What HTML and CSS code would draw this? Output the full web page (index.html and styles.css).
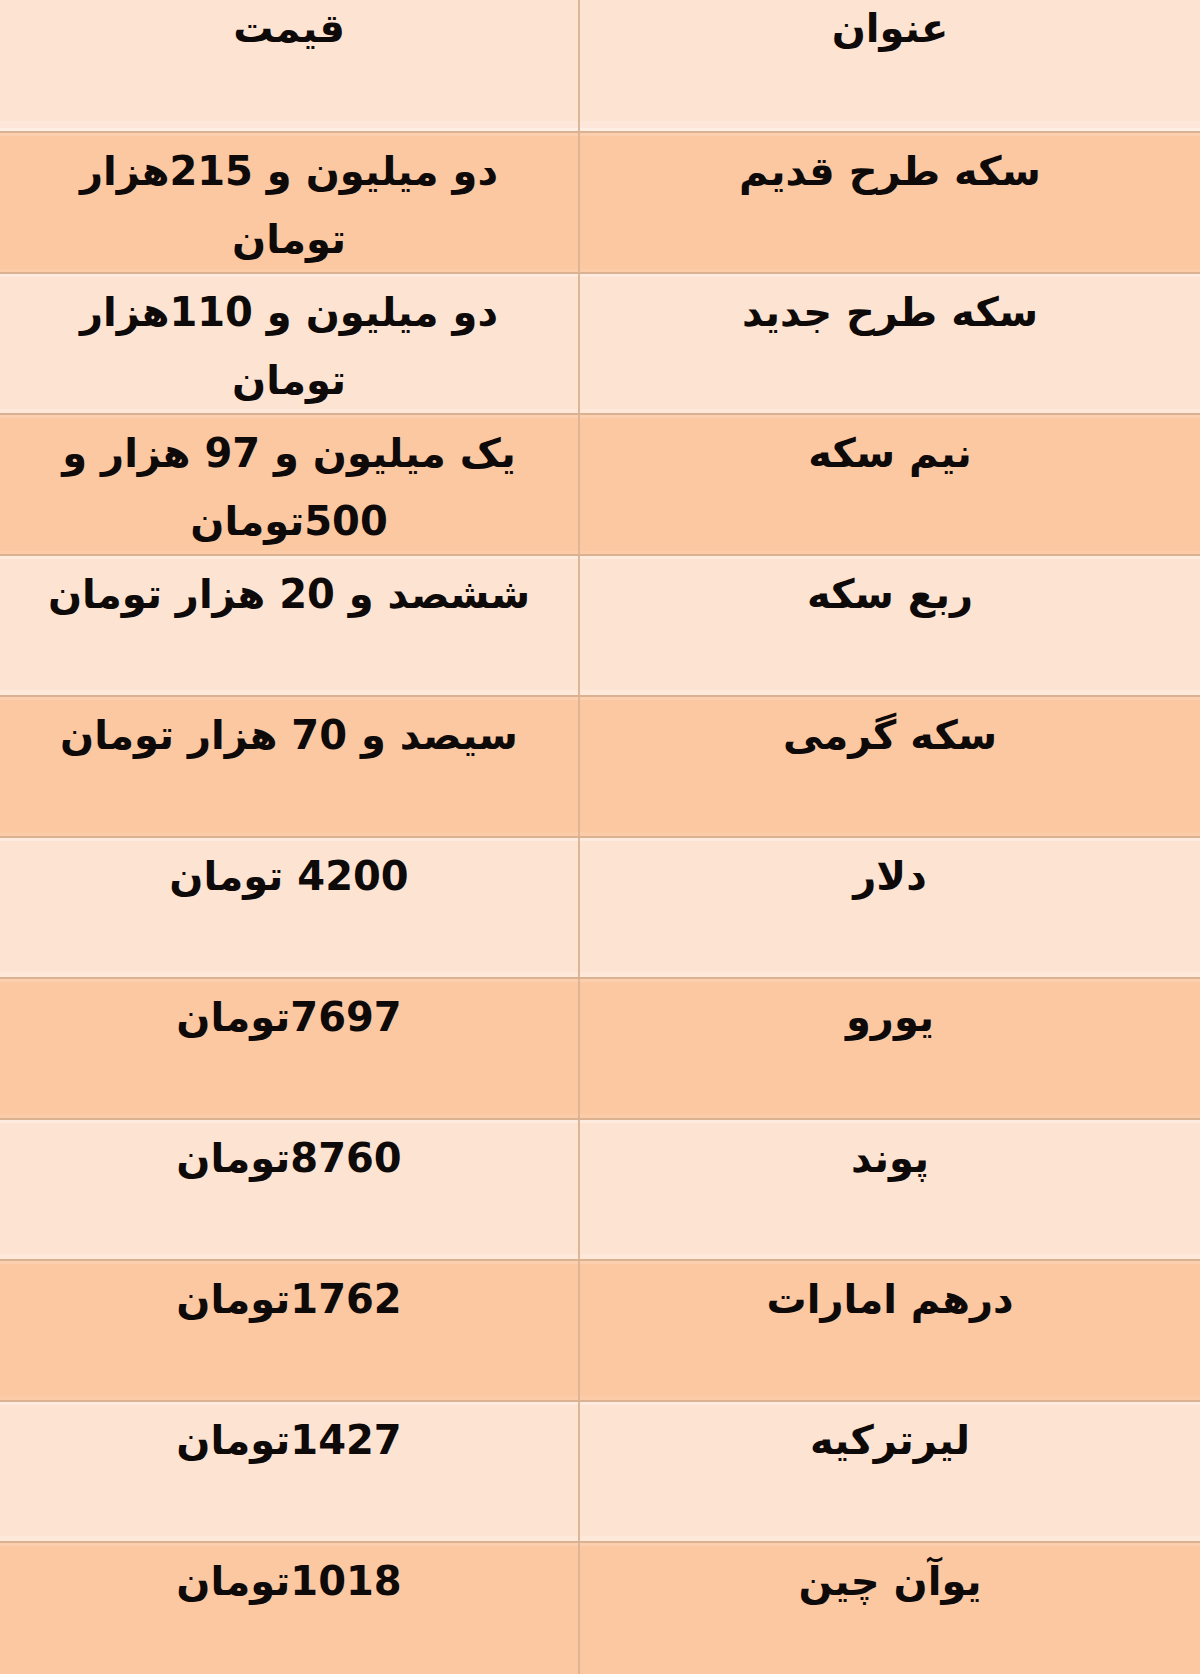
FILE: index.html
```html
<!DOCTYPE html>
<html lang="fa" dir="rtl">
<head>
<meta charset="utf-8">
<title>قیمت سکه و ارز</title>
<link rel="stylesheet" href="styles.css">
</head>
<body>
<div class="table">
  <div class="row head light">
    <div class="cell title">عنوان</div>
    <div class="cell price">قیمت</div>
  </div>
  <div class="row dark">
    <div class="cell title">سکه طرح قدیم</div>
    <div class="cell price">دو میلیون و 215هزار<br>تومان</div>
  </div>
  <div class="row light">
    <div class="cell title">سکه طرح جدید</div>
    <div class="cell price">دو میلیون و 110هزار<br>تومان</div>
  </div>
  <div class="row dark">
    <div class="cell title">نیم سکه</div>
    <div class="cell price">یک میلیون و 97 هزار و<br>500تومان</div>
  </div>
  <div class="row light">
    <div class="cell title">ربع سکه</div>
    <div class="cell price">ششصد و 20 هزار تومان</div>
  </div>
  <div class="row dark">
    <div class="cell title">سکه گرمی</div>
    <div class="cell price">سیصد و 70 هزار تومان</div>
  </div>
  <div class="row light">
    <div class="cell title">دلار</div>
    <div class="cell price">4200 تومان</div>
  </div>
  <div class="row dark">
    <div class="cell title">یورو</div>
    <div class="cell price">7697تومان</div>
  </div>
  <div class="row light">
    <div class="cell title">پوند</div>
    <div class="cell price">8760تومان</div>
  </div>
  <div class="row dark">
    <div class="cell title">درهم امارات</div>
    <div class="cell price">1762تومان</div>
  </div>
  <div class="row light">
    <div class="cell title">لیرترکیه</div>
    <div class="cell price">1427تومان</div>
  </div>
  <div class="row dark">
    <div class="cell title">یوآن چین</div>
    <div class="cell price">1018تومان</div>
  </div>
</div>
</body>
</html>
```

FILE: styles.css
```css
html, body {
  margin: 0;
  padding: 0;
}
body {
  width: 1200px;
  height: 1674px;
  overflow: hidden;
  background: #fde3d1;
  font-family: "DejaVu Sans", sans-serif;
  color: #0e0a0a;
}
.table {
  display: flex;
  flex-direction: column;
}
.row {
  display: grid;
  grid-template-columns: 622px 578px;
  height: 141px;
  box-sizing: border-box;
  border-top: 2px solid #dab291;
  flex: none;
}
.row.head {
  height: 131px;
  border-top: none;
}
.light {
  background: #fde3d1;
}
.dark {
  background: #fbc8a2;
}
.cell {
  text-align: center;
  font-weight: bold;
  font-size: 40px;
  line-height: 68px;
  padding-top: 4px;
  white-space: nowrap;
  box-sizing: border-box;
}
.head .cell {
  padding-top: 0;
  line-height: 56px;
}
.title {
  border-left: 2px solid #dcb696;
}
.light .cell {
  box-shadow: inset 0 3px 0 #fcebde, inset 0 -5px 0 #fde8da;
}
.head .cell {
  box-shadow: inset 0 -3px 0 #fdefe6, inset 0 -10px 0 #fce7da;
}
.dark .cell {
  box-shadow: inset 0 3px 0 #fcd0ae, inset 0 -4px 0 #fbcca7;
}
```
